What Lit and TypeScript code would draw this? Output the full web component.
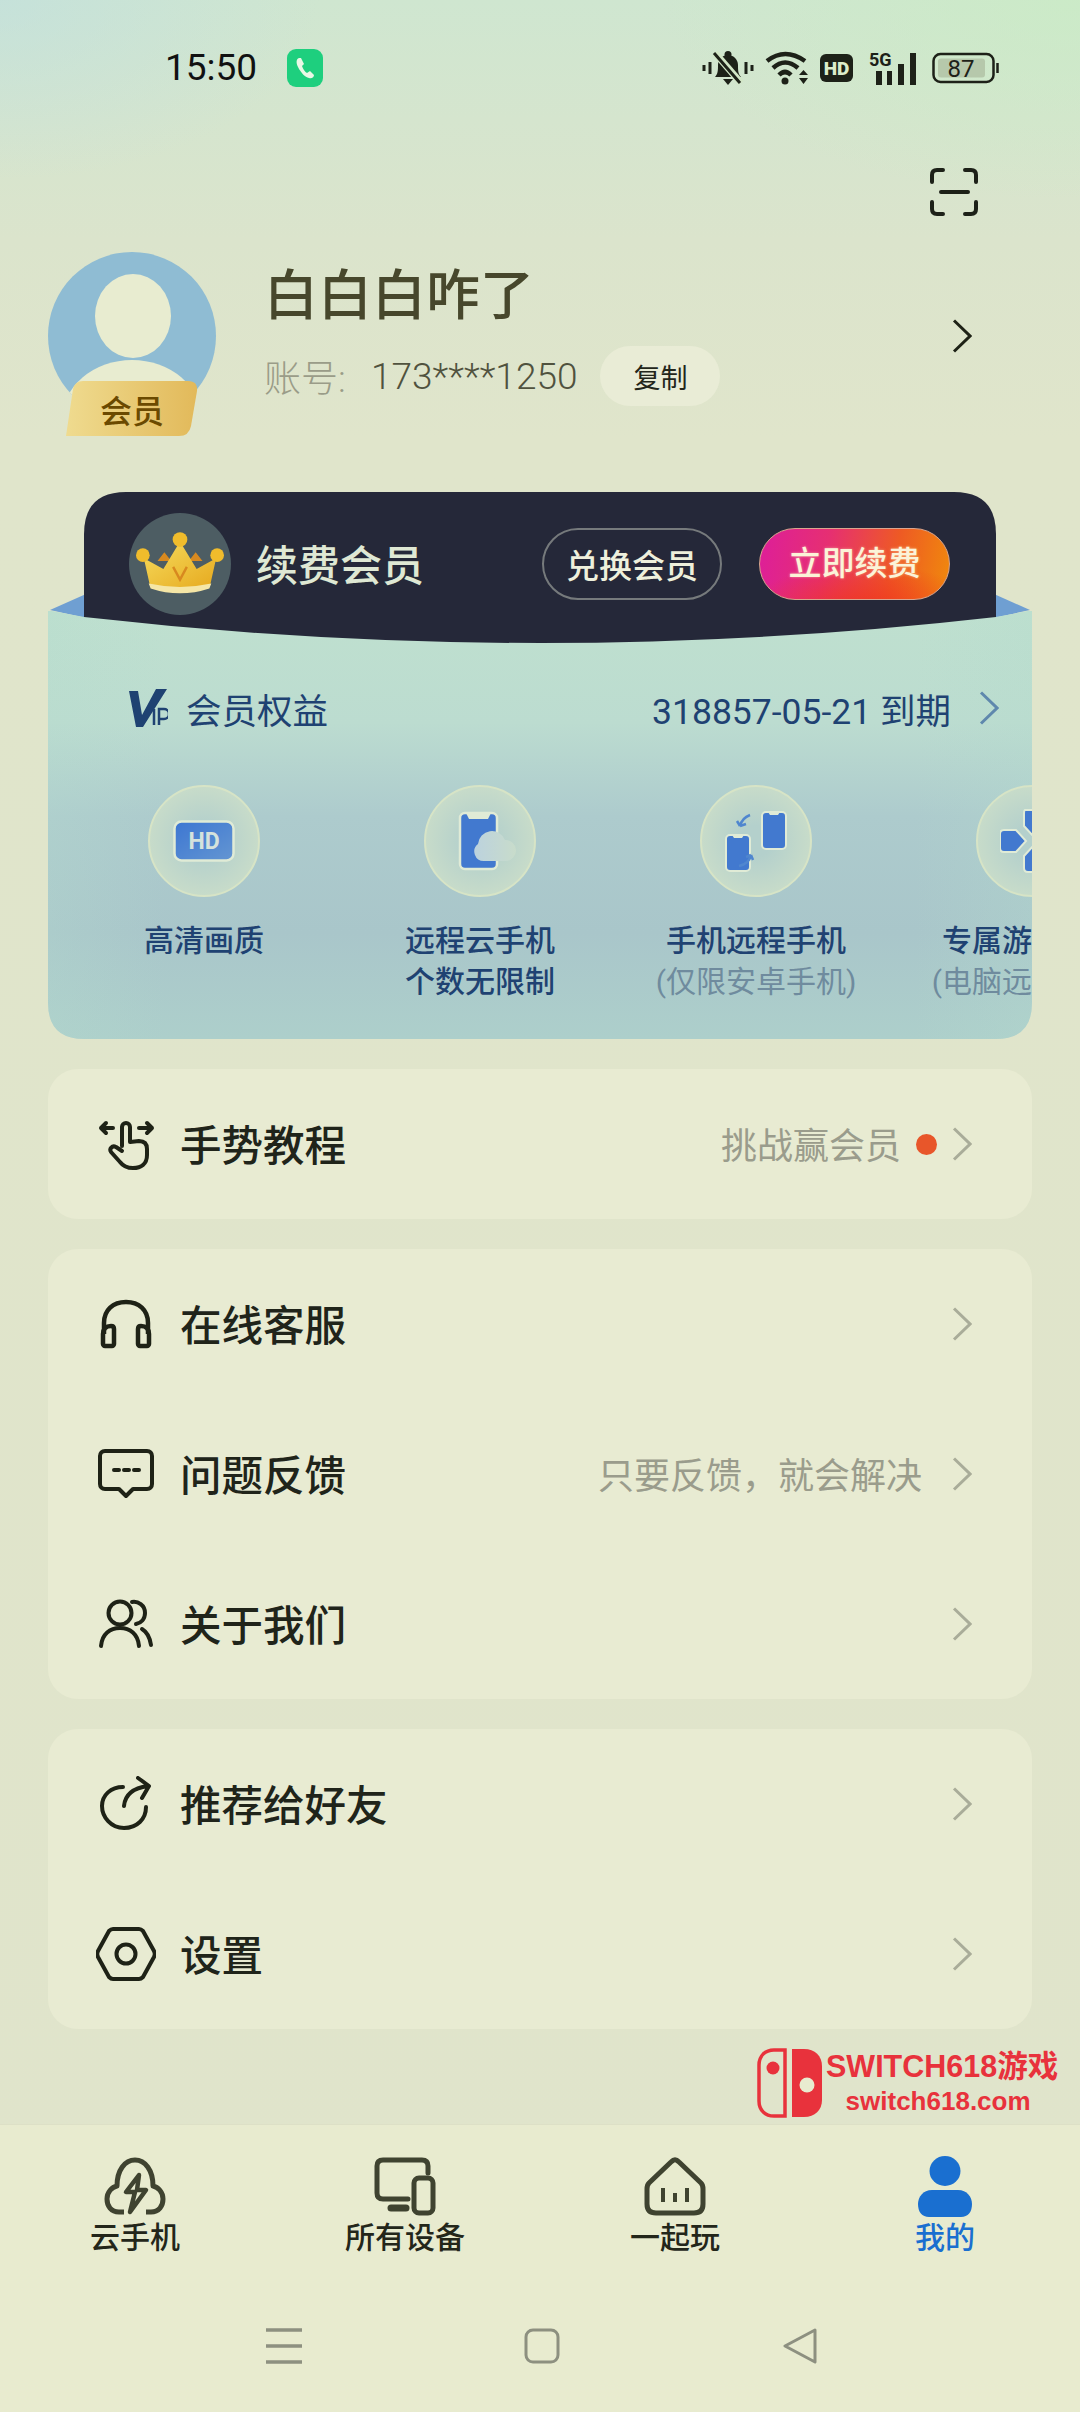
import {LitElement, css, html} from 'lit';
import {customElement} from 'lit/decorators.js';

const chevron = html`<svg class="chev" width="20" height="34" viewBox="0 0 20 34"><path d="M2 1.5 18 17 2 32.5" fill="none" stroke="currentColor" stroke-width="3"/></svg>`;

const icons = {
  gesture: html`<svg width="60" height="56" viewBox="0 0 60 56" fill="none" stroke="#1e2216" stroke-width="4" stroke-linecap="round" stroke-linejoin="round"><path d="M5 12H17M5 12l5-5M5 12l5 5M43 12H56M56 12l-5-5M56 12l-5 5"/><path d="M26 30V11a4 4 0 0 1 8 0v15l9-1c6 0 8 3 8 8v6c0 9-6 13-14 13-6 0-10-2-13-6l-9-10c-2-3 1-7 5-5l6 4"/></svg>`,
  headset: html`<svg width="60" height="56" viewBox="0 0 60 56" fill="none" stroke="#1e2216" stroke-width="4.5"><path d="M8 38V27C8 14 17 6 30 6s22 8 22 21v11"/><path d="M7 38c0-5 3-8 8-8 2 0 3 1 3 3v15c0 1-1 2-2 2H9c-1 0-2-1-2-2z"/><path d="M53 38c0-5-3-8-8-8-2 0-3 1-3 3v15c0 1 1 2 2 2h7c1 0 2-1 2-2z"/></svg>`,
  feedback: html`<svg width="60" height="56" viewBox="0 0 60 56" fill="none" stroke="#1e2216" stroke-width="4" stroke-linejoin="round"><path d="M9 5h42c3 0 5 2 5 5v28c0 3-2 5-5 5H37l-7 7-7-7H9c-3 0-5-2-5-5V10c0-3 2-5 5-5z"/><path d="M18 24h5M28 24h5M38 24h5" stroke-linecap="round"/></svg>`,
  users: html`<svg width="60" height="56" viewBox="0 0 60 56" fill="none" stroke="#1e2216" stroke-width="4" stroke-linecap="round"><circle cx="24" cy="17" r="11.5"/><path d="M5 50c1-12 9-18 19-18s18 6 19 18"/><path d="M36 6c6-1 13 3 13 11 0 6-4 10-9 11M46 33c5 3 8 9 9 16"/></svg>`,
  share: html`<svg width="60" height="56" viewBox="0 0 60 56" fill="none" stroke="#1e2216" stroke-width="4" stroke-linecap="round" stroke-linejoin="round"><path d="M27 11C15 11 6 19 6 30s9 22 22 22 22-9 22-21"/><path d="M28 30c1-11 9-18 24-20M42 2l11 8-7 12"/></svg>`,
  settings: html`<svg width="60" height="56" viewBox="0 0 60 56" fill="none" stroke="#1e2216" stroke-width="4" stroke-linejoin="round"><path d="M17 3h26c2 0 3 1 4 2l11 20c1 2 1 4 0 6L47 51c-1 1-2 2-4 2H17c-2 0-3-1-4-2L2 31c-1-2-1-4 0-6L13 5c1-1 2-2 4-2z"/><circle cx="30" cy="28" r="9.5"/></svg>`
};

const tabIcons = {
  cloud: html`<svg width="62" height="58" viewBox="0 0 62 58" fill="none" stroke="#3f4330" stroke-width="5" stroke-linejoin="round"><path d="M20 55H15C7 55 3 49 3 42c0-7 5-12 10-13C13 13 21 3 31 3s18 10 18 26c5 1 10 6 10 13 0 7-4 13-12 13h-5"/><path d="M35 18 22 35h9l-5 20 16-22h-9z" fill="#e8ebcf" stroke-width="4.5"/></svg>`,
  devices: html`<svg width="62" height="58" viewBox="0 0 62 58" fill="none" stroke="#3f4330" stroke-width="5" stroke-linecap="round" stroke-linejoin="round"><path d="M54 16V9c0-4-2-6-6-6H9C5 3 3 5 3 9v27c0 4 2 6 6 6h25"/><path d="M17 51h15" stroke-width="7"/><rect x="40" y="21" width="19" height="35" rx="5"/></svg>`,
  home: html`<svg width="62" height="58" viewBox="0 0 62 58" fill="none" stroke="#3f4330" stroke-width="5" stroke-linejoin="round"><path d="M27 5 5 26c-2 2-2 3-2 6v15c0 6 3 9 9 9h38c6 0 9-3 9-9V32c0-3 0-4-2-6L35 5c-3-3-5-3-8 0z"/><path d="M19 31v14M31 36v9M43 31v14" stroke-width="4"/></svg>`,
  me: html`<svg width="62" height="62" viewBox="0 0 62 62" fill="#1a6fd0"><ellipse cx="31" cy="16" rx="15.5" ry="15"/><path d="M18 35h26c9 0 14 7 14 14 0 8-4 13-11 13H15C8 62 4 57 4 49c0-7 5-14 14-14z"/></svg>`
};

@customElement('member-card')
export class MemberCard extends LitElement {
  static styles = css`
    :host {
      display: block;
      position: relative;
      margin: 0 48px;
      height: 547px;
      font-family: Roboto, "Noto Sans CJK SC", sans-serif;
    }
    .head {
      position: relative;
      z-index: 2;
      margin: 0 36px;
      height: 151px;
      background: #252839;
      clip-path: path("M0 42Q0 0 42 0H870Q912 0 912 42V125Q456 177 0 125Z");
      display: flex;
      align-items: flex-start;
      padding: 21px 46px 0 45px;
      box-sizing: border-box;
    }
    .crown {
      width: 102px;
      height: 102px;
      border-radius: 50%;
      background: #4d5d63;
      display: flex;
      align-items: center;
      justify-content: center;
      flex: none;
    }
    .renew-title {
      margin-left: 25px;
      font-size: 42px;
      line-height: 107px;
      color: #dfe8d4;
      font-weight: 500;
      flex: 1;
    }
    .btn {
      margin-top: 15px;
      height: 72px;
      border-radius: 36px;
      box-sizing: border-box;
      display: flex;
      align-items: center;
      justify-content: center;
      font-size: 33px;
      font-weight: 500;
    }
    .exchange {
      width: 180px;
      border: 2px solid #767a7c;
      color: #eef0dc;
    }
    .buy {
      width: 191px;
      margin-left: 37px;
      color: #fbf3d8;
      border: 1px solid #d9a58e;
      background:
        radial-gradient(60% 60% at 55% 110%, rgba(240,50,30,.8), rgba(240,50,30,0)),
        linear-gradient(100deg, #dd1e9a 0%, #e62f72 35%, #ee5a24 70%, #f08a0c 100%);
      padding-bottom: 6px;
      text-shadow: 0 0 3px rgba(255,240,200,.5);
    }
    .shoulder {
      position: absolute;
      top: 102px;
      left: 0;
      z-index: 0;
    }
    .shoulder.right {
      left: auto;
      right: 0;
      transform: scaleX(-1);
    }
    .pocket {
      position: relative;
      z-index: 1;
      margin-top: -32px;
      height: 428px;
      overflow: hidden;
      clip-path: path("M0 0H4L36 6H948L980 0H984V392Q984 428 948 428H36Q0 428 0 392Z");
      background:
        linear-gradient(90deg, rgba(180,220,205,.28), rgba(180,220,205,0) 12%, rgba(180,220,205,0) 88%, rgba(180,220,205,.28)),
        linear-gradient(180deg, #bfe0cf 0%, #bcdcd0 26%, #adcbcd 48%, #a9c6ca 75%, #adcfcb 100%);
    }
    .rights {
      display: flex;
      align-items: center;
      height: 60px;
      margin-top: 67px;
      padding: 0 33px 0 81px;
      color: #1f4272;
      font-size: 35.500px;
    }
    .rights svg.vip {
      margin-right: 18px;
      flex: none;
    }
    .rights .name {
      flex: 1;
    }
    .rights .chev {
      margin-left: 28px;
      color: #5f88ad;
    }
    .perks {
      display: flex;
      margin-top: 47px;
      margin-left: 18px;
    }
    .perk {
      flex: none;
      width: 276px;
      display: flex;
      flex-direction: column;
      align-items: center;
      text-align: center;
      font-size: 30px;
      line-height: 41px;
      color: #1f4272;
      font-weight: 500;
    }
    .disc {
      width: 112px;
      height: 112px;
      margin-bottom: 23px;
      border-radius: 50%;
      box-sizing: border-box;
      border: 2px solid #d7e4c6;
      background: radial-gradient(circle, #b4d0cc 20%, #d2e2c8 100%);
      display: flex;
      align-items: center;
      justify-content: center;
    }
    .perk small {
      font-size: 30px;
      font-weight: 400;
      color: #6f8b9e;
    }
  `;

  render() {
    return html`
      <div class="head">
        <div class="crown">
          <svg width="88" height="66" viewBox="0 0 90 66">
            <defs>
              <linearGradient id="cg" x1="0" x2="1" y1="0" y2="1"><stop offset="0" stop-color="#f6dc5e"/><stop offset="1" stop-color="#e6a91e"/></linearGradient>
            </defs>
            <path d="M22 30l7-9 7 9zM54 30l7-9 7 9z" fill="#d8891f"/>
            <path d="M8 27 28 38 45 10 62 38 82 27 76 54Q45 62 14 54Z" fill="url(#cg)"/>
            <path d="M13 53Q45 60 77 53L75 58Q45 68 15 58Z" fill="#f5e6a6"/>
            <circle cx="7" cy="24" r="7" fill="#f0bc2c"/><circle cx="83" cy="24" r="7" fill="#f0bc2c"/><circle cx="45" cy="8" r="7.500" fill="#f0bc2c"/>
            <path d="M38 36l7 13 7-13" fill="none" stroke="#d8891f" stroke-width="2.500"/>
          </svg>
        </div>
        <div class="renew-title">续费会员</div>
        <div class="btn exchange">兑换会员</div>
        <div class="btn buy">立即续费</div>
      </div>
      <svg class="shoulder" width="40" height="24" viewBox="0 0 40 24"><path d="M2 16 38 0V24Z" fill="#6f9fd2"/></svg>
      <svg class="shoulder right" width="40" height="24" viewBox="0 0 40 24"><path d="M2 16 38 0V24Z" fill="#6f9fd2"/></svg>
      <div class="pocket">
        <div class="rights">
          <svg class="vip" width="39" height="38" viewBox="0 0 39 38"><path d="M0 2H9L13 26 27 0H38L14 38H7Z" fill="#1f4272"/><path d="M25 20v16M30 36V20h5a4.500 4.500 0 0 1 0 10h-5" fill="none" stroke="#1f4272" stroke-width="2.500"/></svg>
          <span class="name">会员权益</span>
          <span>318857-05-21 到期</span>
          ${chevron}
        </div>
        <div class="perks">
          <div class="perk">
            <div class="disc"><svg width="62" height="42" viewBox="0 0 62 42"><defs><linearGradient id="b" x1="0" x2="1" y1="0" y2="1"><stop offset="0" stop-color="#3c76d2"/><stop offset="1" stop-color="#6496d2"/></linearGradient></defs><rect x="1.500" y="1.500" width="59" height="39" rx="7" fill="url(#b)" stroke="#e0ebd6" stroke-width="2.500"/><text x="31" y="29" text-anchor="middle" font-family="Roboto" font-weight="700" font-size="23" fill="#d5e2dc">HD</text></svg></div>
            高清画质
          </div>
          <div class="perk">
            <div class="disc"><svg width="72" height="60" viewBox="0 0 72 60"><defs><linearGradient id="c" x1="0" x2="1" y1="0" y2="0"><stop offset="0" stop-color="#bcd2de"/><stop offset="1" stop-color="#c8dccb"/></linearGradient></defs><rect x="16" y="2" width="37" height="56" rx="5" fill="#4279cf" stroke="#e0ebd6" stroke-width="2.500"/><path d="M22 2H47L44 8H25Z" fill="#e0ebd6"/><path d="M40 50a9.500 9.500 0 0 1-6-17 14 14 0 0 1 27-4 10.500 10.500 0 0 1 1 21Z" fill="url(#c)"/></svg></div>
            远程云手机<br />个数无限制
          </div>
          <div class="perk">
            <div class="disc"><svg width="62" height="62" viewBox="0 0 62 62"><rect x="37" y="2" width="24" height="37" rx="4" fill="#4279cf" stroke="#e0ebd6" stroke-width="2"/><rect x="1" y="25" width="24" height="36" rx="4" fill="#4279cf" stroke="#e0ebd6" stroke-width="2"/><path d="M43 2H55L53 5H45ZM7 25H19L17 28H9Z" fill="#e0ebd6"/><path d="M25 5Q17 8 15 16M15 16l-3-5M15 16l6-2M14 56Q24 54 26 45M26 45l-5 2M26 45l2 5" fill="none" stroke="#4f86cf" stroke-width="2.500"/></svg></div>
            手机远程手机<br /><small>(仅限安卓手机)</small>
          </div>
          <div class="perk">
            <div class="disc"><svg width="64" height="66" viewBox="2 0 64 66"><path d="M6 22H18L28 33 18 44H6Q2 44 2 40V26Q2 22 6 22ZM27 2H42Q46 2 46 6V18L36 29 26 18V6Q26 2 27 2ZM36 37 46 48V60Q46 64 42 64H30Q26 64 26 60V48Z" fill="#4279cf" stroke="#e0ebd6" stroke-width="2"/></svg></div>
            专属游戏特权<br /><small>(电脑远程游戏)</small>
          </div>
        </div>
      </div>
    `;
  }
}

@customElement('app-root')
export class AppRoot extends LitElement {
  static styles = css`
    :host {
      display: block;
      width: 1080px;
    }
    .page {
      position: relative;
      height: 2412px;
      display: flex;
      flex-direction: column;
      overflow: hidden;
      font-family: Roboto, "Noto Sans CJK SC", sans-serif;
      background:
        radial-gradient(320px 180px at 0 0, rgba(190,222,226,.55), rgba(190,222,226,0)),
        radial-gradient(420px 200px at 100% 0, rgba(202,236,196,.7), rgba(202,236,196,0)),
        linear-gradient(180deg, #cfe6d0 0, #dbe4cc 240px, #e0e5cb 440px, #e0e4cb 100%);
    }
    .status {
      display: flex;
      align-items: center;
      height: 40px;
      margin-top: 48px;
      padding: 0 80px 0 165px;
      color: #111;
    }
    .time {
      font-size: 37px;
      line-height: 40px;
      width: 122px;
    }
    .call {
      width: 36px;
      height: 38px;
      border-radius: 9px;
      background: #1ecf7e;
      display: flex;
      align-items: center;
      justify-content: center;
    }
    .status-right {
      margin-left: auto;
      display: flex;
      align-items: center;
    }
    .scan-row {
      display: flex;
      justify-content: flex-end;
      padding: 80px 102px 0 0;
    }
    .profile {
      position: relative;
      display: flex;
      margin: 36px 0 0 48px;
      height: 183px;
    }
    .avatar {
      position: relative;
      width: 168px;
      height: 168px;
      border-radius: 50%;
      background: #8fbcd3;
      overflow: hidden;
      flex: none;
    }
    .avatar svg {
      display: block;
    }
    .badge {
      position: absolute;
      left: 18px;
      top: 129px;
      width: 132px;
      height: 55px;
      display: flex;
      align-items: center;
      justify-content: center;
      font-size: 32px;
      font-weight: 500;
      color: #6b4a00;
      background: linear-gradient(90deg, #efdb8f, #e2b95a);
      clip-path: path("M7 8Q9 0 17 0H122Q132 0 131 10L125 45Q123 55 113 55H0Z");
    }
    .who {
      margin-left: 48px;
      flex: 1;
    }
    .name {
      font-size: 54px;
      line-height: 62px;
      margin-top: 14px;
      font-weight: 500;
      color: #47472c;
    }
    .acct {
      display: flex;
      align-items: center;
      margin-top: 18px;
      height: 60px;
      font-size: 37px;
      color: #50523e;
      font-weight: 300;
    }
    .acct .lab {
      color: #9a9c88;
      width: 107px;
    }
    .copy {
      margin-left: 23px;
      width: 120px;
      height: 60px;
      border-radius: 30px;
      background: #e9ecd6;
      display: flex;
      align-items: center;
      justify-content: center;
      font-size: 27px;
      color: #23261a;
      font-weight: 400;
    }
    .profile > .chev {
      margin: 67px 108px 0 0;
      color: #1e2216;
    }
    member-card {
      margin-top: 57px;
    }
    .card {
      margin: 30px 48px 0;
      border-radius: 30px;
      background: #e8ebd2;
    }
    .row {
      height: 150px;
      display: flex;
      align-items: center;
      padding: 0 60px 0 48px;
      font-size: 41.500px;
      font-weight: 500;
      color: #20241a;
    }
    .row > svg:first-child {
      flex: none;
      margin-right: 24px;
    }
    .row .txt {
      flex: 1;
      padding-bottom: 2px;
    }
    .row .hint {
      font-size: 36px;
      font-weight: 400;
      color: #9a9c8c;
      padding-bottom: 2px;
    }
    .dot {
      width: 21px;
      height: 21px;
      border-radius: 50%;
      background: #e8562a;
      margin-left: 15px;
    }
    .row .chev {
      margin-left: 30px;
      color: #a9ac99;
    }
    .row .dot + .chev {
      margin-left: 15px;
    }
    .mark {
      position: absolute;
      left: 757px;
      top: 2048px;
      display: flex;
      color: #e8323c;
      font-family: "Liberation Sans", sans-serif;
      font-weight: 700;
      text-align: center;
    }
    .mark .big {
      font-size: 30.500px;
      line-height: 36px;
      white-space: nowrap;
      font-family: "Liberation Sans", "Noto Sans CJK SC", sans-serif;
    }
    .mark .small {
      font-size: 26px;
      line-height: 34px;
      padding-right: 8px;
    }
    .mark svg {
      margin-right: 3px;
    }
    .tabs {
      margin-top: auto;
      height: 288px;
      background: #e8ebcf;
      border-top: 1px solid #dde0c6;
      box-sizing: border-box;
    }
    .tabrow {
      display: grid;
      grid-template-columns: repeat(4, 270px);
      padding-top: 30px;
    }
    .tab {
      display: flex;
      flex-direction: column;
      align-items: center;
      font-size: 30px;
      line-height: 40px;
      color: #23261a;
      font-weight: 500;
    }
    .tab svg {
      height: 62px;
      margin-bottom: 1px;
    }
    .tab.on {
      color: #1a6fd0;
    }
    .nav {
      display: flex;
      justify-content: center;
      gap: 222px;
      margin-top: 70px;
      padding-left: 4px;
    }
  `;

  private row(icon: unknown, label: string, hint = '', dot = false) {
    return html`<div class="row">
      ${icon}
      <span class="txt">${label}</span>
      ${hint ? html`<span class="hint">${hint}</span>` : ''}
      ${dot ? html`<span class="dot"></span>` : ''}
      ${chevron}
    </div>`;
  }

  render() {
    return html`
      <div class="page">
        <div class="status">
          <span class="time">15:50</span>
          <span class="call"><svg width="22" height="24" viewBox="0 0 22 24"><path d="M5 2C2 3 2 7 4 11c3 6 7 10 11 11 3 1 5-1 5-3l-4-4-3 2c-2-1-4-4-5-7l2-2L7 2Z" fill="#e9f8e6"/></svg></span>
          <div class="status-right">
            <svg width="52" height="36" viewBox="0 0 52 36"><path d="M13 27c3-3 3-7 3-12 0-6 5-10 10-10s10 4 10 10c0 5 0 9 3 12Z" fill="#1d2118"/><circle cx="26" cy="4.500" r="3.500" fill="#1d2118"/><path d="M21 29h10l-5 6z" fill="#1d2118"/><path d="M13 3 39 33" stroke="#d2e6c6" stroke-width="7"/><path d="M12 3 38 33" stroke="#1d2118" stroke-width="3"/><path d="M2 15v6M8 12v12M44 12v12M50 15v6" stroke="#1d2118" stroke-width="3"/></svg>
            <svg style="margin-left:11px" width="46" height="36" viewBox="0 0 46 36"><path d="M2 11Q20-3 40 11M8 18Q20 7 33 18M14 25Q20 19 26 25" fill="none" stroke="#1d2118" stroke-width="4.500"/><circle cx="20" cy="31" r="3.500" fill="#1d2118"/><path d="M34 25h9l-4.500-5zM34 28h9l-4.500 6z" fill="#1d2118"/></svg>
            <svg style="margin-left:9px" width="33" height="28" viewBox="0 0 33 28"><rect width="33" height="28" rx="6" fill="#1d2118"/><text x="16.500" y="21" text-anchor="middle" font-family="Roboto" font-weight="900" font-size="19" fill="#dcecca">HD</text></svg>
            <svg style="margin-left:16px" width="48" height="40" viewBox="0 -3 48 40"><text x="0" y="15" font-family="Roboto" font-weight="700" font-size="18" fill="#1d2118">5G</text><path d="M7 20h6v14H7zM18 20h5v14h-5zM29 13h6v21h-6zM41 2h6v32h-6z" fill="#1d2118"/></svg>
            <svg style="margin-left:15px" width="68" height="32" viewBox="0 0 68 32"><rect x="1.500" y="2" width="60" height="28" rx="7" fill="none" stroke="#1d2118" stroke-width="2.500"/><rect x="6" y="6.500" width="47" height="19" rx="3" fill="#b6c8ab"/><path d="M65.500 11v10" stroke="#1d2118" stroke-width="2.500"/><text x="29" y="24.500" text-anchor="middle" font-family="Roboto" font-size="24" fill="#1d2118">87</text></svg>
          </div>
        </div>
        <div class="scan-row">
          <svg width="48" height="48" viewBox="0 0 48 48" fill="none" stroke="#1d2118" stroke-width="4" stroke-linecap="round"><path d="M2 14V7q0-5 5-5h6M35 2h6q5 0 5 5v7M2 34v7q0 5 5 5h6M35 46h6q5 0 5-5v-7M11 24h27"/></svg>
        </div>
        <div class="profile">
          <div class="avatar">
            <svg width="168" height="168" viewBox="0 0 168 168"><ellipse cx="85" cy="64" rx="38" ry="42" fill="#e8ecd0"/><ellipse cx="84" cy="168" rx="70" ry="60" fill="#e8ecd0"/></svg>
          </div>
          <div class="badge">会员</div>
          <div class="who">
            <div class="name">白白白咋了</div>
            <div class="acct"><span class="lab">账号:</span><span>173****1250</span><span class="copy">复制</span></div>
          </div>
          ${chevron}
        </div>
        <member-card></member-card>
        <div class="card">${this.row(icons.gesture, '手势教程', '挑战赢会员', true)}</div>
        <div class="card">
          ${this.row(icons.headset, '在线客服')}
          ${this.row(icons.feedback, '问题反馈', '只要反馈，就会解决')}
          ${this.row(icons.users, '关于我们')}
        </div>
        <div class="card">
          ${this.row(icons.share, '推荐给好友')}
          ${this.row(icons.settings, '设置')}
        </div>
        <div class="mark">
          <svg width="66" height="70" viewBox="0 0 66 70"><path d="M28 2H17C8 2 2 8 2 17v36c0 9 6 15 15 15h11Z" fill="none" stroke="#e8323c" stroke-width="3.500"/><circle cx="16" cy="20" r="6.500" fill="#e8323c"/><path d="M35 1h12c11 0 18 7 18 17v34c0 10-7 17-18 17H35Z" fill="#e8323c"/><circle cx="50" cy="37" r="7.500" fill="#e8ebcf"/></svg>
          <div>
            <div class="big">SWITCH618游戏</div>
            <div class="small">switch618.com</div>
          </div>
        </div>
        <div class="tabs">
          <div class="tabrow">
            <div class="tab">${tabIcons.cloud}云手机</div>
            <div class="tab">${tabIcons.devices}所有设备</div>
            <div class="tab">${tabIcons.home}一起玩</div>
            <div class="tab on">${tabIcons.me}我的</div>
          </div>
          <div class="nav">
            <svg width="36" height="36" viewBox="0 0 36 36" stroke="#8d9080" stroke-width="3.500"><path d="M0 2h36M0 18h36M0 34h36"/></svg>
            <svg width="36" height="36" viewBox="0 0 36 36" fill="none" stroke="#8d9080" stroke-width="3"><rect x="2" y="2" width="32" height="32" rx="7"/></svg>
            <svg width="36" height="36" viewBox="0 0 36 36" fill="none" stroke="#8d9080" stroke-width="3" stroke-linejoin="round"><path d="M33 2 3 18 33 34Z"/></svg>
          </div>
        </div>
      </div>
    `;
  }
}
